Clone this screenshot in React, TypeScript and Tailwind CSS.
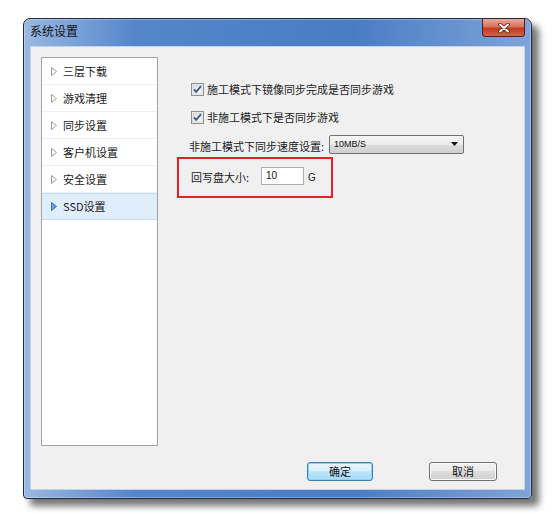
import React from 'react';

const menu = ['三层下载', '游戏清理', '同步设置', '客户机设置', '安全设置', 'SSD设置'];

const Arrow = ({ active }: { active: boolean }) => (
  <svg width="6" height="9" viewBox="0 0 6 9" className="shrink-0">
    <path
      d="M0.5 0.5 L5.5 4.5 L0.5 8.5 Z"
      fill={active ? '#6aa3e0' : '#ffffff'}
      stroke={active ? '#2f6fc0' : '#9a9a9a'}
      strokeWidth="1"
    />
  </svg>
);

const CheckBox = () => (
  <svg width="13" height="13" viewBox="0 0 13 13" className="shrink-0">
    <defs>
      <linearGradient id="cbg" x1="0" y1="0" x2="1" y2="1">
        <stop offset="0" stopColor="#d9dbdd" />
        <stop offset="1" stopColor="#ffffff" />
      </linearGradient>
    </defs>
    <rect x="0.5" y="0.5" width="12" height="12" fill="#f4f4f4" stroke="#8e8f8f" />
    <rect x="2" y="2" width="9" height="9" fill="url(#cbg)" stroke="#c4c6c9" strokeWidth="0.6" />
    <path d="M3 6.3 L5.2 8.8 L10 3.2" fill="none" stroke="#3b5596" strokeWidth="1.8" />
  </svg>
);

const CheckRow = ({ label, className }: { label: string; className?: string }) => (
  <div className={`flex h-[20px] items-center gap-[3px] pl-[14px] ${className ?? ''}`}>
    <CheckBox />
    <span className="text-[11px] leading-none text-[#1b1b1b]">{label}</span>
  </div>
);

export default function App() {
  return (
    <div className="h-[514px] w-[553px] overflow-hidden bg-white pl-[23px] pt-[18px] font-['Noto_Sans_CJK_SC',sans-serif]">
      {/* window frame */}
      <div className="flex h-[481px] w-[509px] flex-col rounded-t-[7px] rounded-b-[4px] border border-[#1f2b3d] bg-[linear-gradient(90deg,#9ab8e2_0%,#5586cb_22%,#4a7cc4_65%,#7fa4d9_100%)] px-[6px] pb-[8px] shadow-[inset_0_0_0_1px_rgba(255,255,255,0.3),7px_7px_7px_rgba(0,0,0,0.55)]">
        {/* title bar */}
        <div className="flex h-[27px] items-start justify-between">
          <span className="mt-[6px] text-[12px] leading-none text-[#111]">系统设置</span>
          <div className="flex h-[18px] w-[43px] items-center justify-center rounded-b-[4px] border border-t-0 border-[#5b1a12] bg-[linear-gradient(180deg,#e9a99b_0%,#d7745f_45%,#c2391f_55%,#d2644a_100%)]">
            <svg width="12" height="10" viewBox="0 0 12 10">
              <path d="M2 1.5 L10 8.5 M10 1.5 L2 8.5" stroke="#4a1a12" strokeWidth="3.6" strokeLinecap="round" />
              <path d="M2 1.5 L10 8.5 M10 1.5 L2 8.5" stroke="#ffffff" strokeWidth="2" strokeLinecap="round" />
            </svg>
          </div>
        </div>

        {/* client area */}
        <div className="flex flex-1 flex-col border border-[#c3d4ea] bg-[#f0f0f0] pl-[10px] pt-[10px]">
          <div className="flex">
            {/* side menu */}
            <div className="h-[389px] w-[117px] border border-[#a3a3a3] bg-white">
              {menu.map((item, i) => {
                const active = i === menu.length - 1;
                return (
                  <div
                    key={item}
                    className={`flex h-[27px] items-center gap-[6px] pl-[9px] text-[11px] leading-none ${
                      active
                        ? 'border-y border-[#c6ddf5] bg-[#e0edfb] text-[#1b1b1b]'
                        : 'border-b border-[#efefef] text-[#1b1b1b]'
                    }`}
                  >
                    <Arrow active={active} />
                    <span>{item}</span>
                  </div>
                );
              })}
            </div>

            {/* settings */}
            <div className="ml-[19px] flex flex-col pt-[22px]">
              <CheckRow label="施工模式下镜像同步完成是否同步游戏" />
              <CheckRow label="非施工模式下是否同步游戏" className="mt-[8px]" />

              <div className="mt-[7px] flex h-[20px] items-center gap-[5px] pl-[12px]">
                <span className="mt-[5px] text-[11px] leading-none text-[#1b1b1b]">非施工模式下同步速度设置:</span>
                <div className="flex h-[19px] w-[135px] items-center justify-between rounded-[2px] border border-[#707070] bg-[linear-gradient(180deg,#f6f6f6_0%,#ebebeb_50%,#dddddd_51%,#cfcfcf_100%)] pl-[4px] pr-[5px]">
                  <span className="font-['Liberation_Sans',sans-serif] text-[9px] leading-none text-[#111]">10MB/S</span>
                  <svg width="7" height="4" viewBox="0 0 7 4">
                    <path d="M0 0 L7 0 L3.5 4 Z" fill="#111" />
                  </svg>
                </div>
              </div>

              <div className="mt-[3px] flex h-[41px] w-[156px] items-center border-2 border-[#ee1d23] pl-[12px]">
                <span className="w-[70px] text-[11px] leading-none text-[#1b1b1b]">回写盘大小:</span>
                <div className="-mt-[3px] flex h-[18px] w-[43px] items-center border border-[#abadb3] bg-white pl-[4px]">
                  <span className="font-['Liberation_Sans',sans-serif] text-[10px] leading-none text-[#111]">10</span>
                </div>
                <span className="ml-[4px] font-['Liberation_Sans',sans-serif] text-[10px] leading-none text-[#222]">G</span>
              </div>
            </div>
          </div>

          {/* buttons */}
          <div className="mt-[16px] flex gap-[56px] pl-[266px]">
            <button className="flex h-[19px] w-[66px] items-center justify-center rounded-[3px] border border-[#3c7fb1] bg-[linear-gradient(180deg,#eaf6fd_0%,#d9f0fc_45%,#bee6fd_50%,#a7d9f5_100%)] text-[11px] leading-none text-[#111] shadow-[inset_0_0_0_1px_#8fd3f5]">
              确定
            </button>
            <button className="flex h-[19px] w-[68px] items-center justify-center rounded-[3px] border border-[#707070] bg-[linear-gradient(180deg,#f2f2f2_0%,#ebebeb_45%,#dddddd_50%,#cfcfcf_100%)] text-[11px] leading-none text-[#111] shadow-[inset_0_0_0_1px_#fcfcfc]">
              取消
            </button>
          </div>
        </div>
      </div>
    </div>
  );
}
